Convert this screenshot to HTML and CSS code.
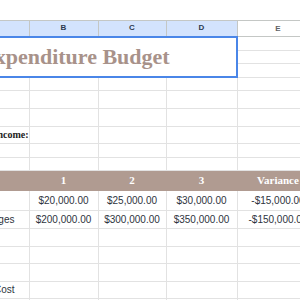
FILE: index.html
```html
<!DOCTYPE html>
<html lang="en">
<head>
    <meta charset="UTF-8">
    <meta name="viewport" content="width=device-width, initial-scale=1.0">
    <title>Expenditure Budget</title>
    <link rel="stylesheet" href="styles.css">
</head>
<body>
    <div class="viewport">
        <table class="sheet">
            <colgroup>
                <col class="col-a">
                <col class="col-b">
                <col class="col-c">
                <col class="col-d">
                <col class="col-e">
            </colgroup>
            <tr class="heading">
                <th class="picked">A</th>
                <th class="picked">B</th>
                <th class="picked">C</th>
                <th class="picked">D</th>
                <th>E</th>
            </tr>
            <tr class="short">
                <td class="title" colspan="4" rowspan="3">Expenditure Budget</td>
                <td></td>
            </tr>
            <tr class="short"><td></td></tr>
            <tr class="short"><td></td></tr>
            <tr class="short"><td></td><td></td><td></td><td></td><td></td></tr>
            <tr class="mid"><td></td><td></td><td></td><td></td><td></td></tr>
            <tr class="mid"><td></td><td></td><td></td><td></td><td></td></tr>
            <tr class="mid"><td class="section">Income:</td><td></td><td></td><td></td><td></td></tr>
            <tr class="short"><td></td><td></td><td></td><td></td><td></td></tr>
            <tr class="short"><td></td><td></td><td></td><td></td><td></td></tr>
            <tr class="band tall">
                <td></td>
                <td>1</td>
                <td>2</td>
                <td>3</td>
                <td>Variance</td>
            </tr>
            <tr class="tall">
                <td></td>
                <td class="num">$20,000.00</td>
                <td class="num">$25,000.00</td>
                <td class="num">$30,000.00</td>
                <td class="num">-$15,000.00</td>
            </tr>
            <tr class="mid">
                <td class="label">Wages</td>
                <td class="num">$200,000.00</td>
                <td class="num">$300,000.00</td>
                <td class="num">$350,000.00</td>
                <td class="num">-$150,000.00</td>
            </tr>
            <tr class="mid"><td></td><td></td><td></td><td></td><td></td></tr>
            <tr class="mid"><td></td><td></td><td></td><td></td><td></td></tr>
            <tr class="mid"><td></td><td></td><td></td><td></td><td></td></tr>
            <tr class="mid"><td class="label">Total Cost</td><td></td><td></td><td></td><td></td></tr>
            <tr class="mid"><td></td><td></td><td></td><td></td><td></td></tr>
        </table>
    </div>
</body>
</html>
```

FILE: styles.css
```css
body {
    margin: 0;
    background: #fff;
    font-family: "Liberation Sans", Arial, sans-serif;
}
.viewport {
    width: 300px;
    height: 300px;
    padding-top: 20px;
    box-sizing: border-box;
    overflow: hidden;
}
.sheet {
    border-collapse: collapse;
    table-layout: fixed;
    width: 358px;
    margin-left: -40px;
    font-size: 10px;
    color: #2e3440;
}
.col-a { width: 68px; }
.col-b { width: 69px; }
.col-c { width: 68px; }
.col-d { width: 71px; }
.col-e { width: 82px; }
.sheet td,
.sheet th {
    border: 1px solid #e2e2e2;
    padding: 0 3px;
    white-space: nowrap;
    overflow: hidden;
    line-height: 1;
}
.heading {
    height: 16px;
}
.heading th {
    font-size: 8px;
    font-weight: bold;
    color: #5f6368;
    text-align: center;
    border-color: #c4c7c5;
    background: #fff;
}
.heading th.picked {
    background: #d3e3fd;
    color: #2d3a4f;
}
.short { height: 13.6px; }
.mid { height: 17.6px; }
.tall { height: 20px; }
.sheet td.title {
    border: 2px solid #4a86e8;
    padding-left: 18px;
    font-family: "Liberation Serif", "Times New Roman", serif;
    font-weight: bold;
    font-size: 22px;
    color: #a8928a;
}
.sheet td.section {
    text-align: right;
    padding-right: 0;
    font-family: "Liberation Serif", serif;
    font-weight: bold;
    color: #222;
}
.sheet td.label {
    text-align: right;
    padding-right: 14px;
}
.num {
    text-align: center;
}
.sheet .band td {
    background: #b09b91;
    border-color: #b09b91;
    color: #fff;
    text-align: center;
    font-family: "Liberation Serif", serif;
    font-weight: bold;
    font-size: 11px;
}
```
